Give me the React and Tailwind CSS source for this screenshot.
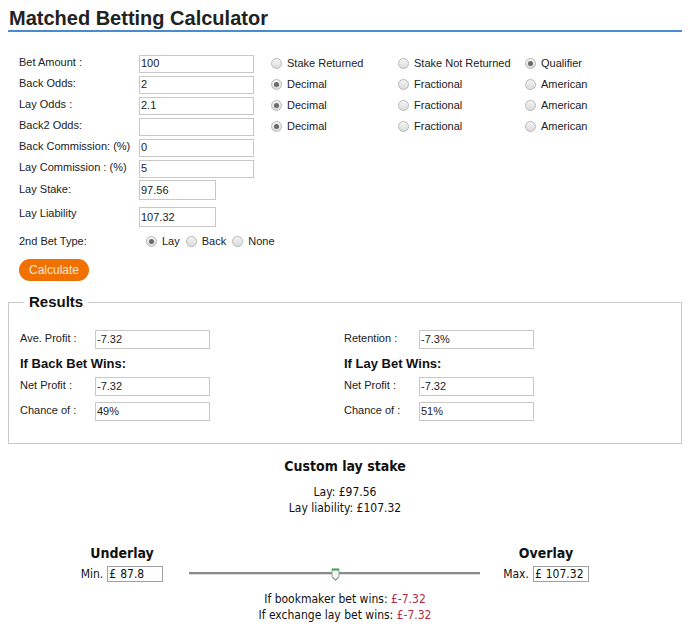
import React from "react";

const Radio = ({ checked }) => (
  <span className="relative inline-flex h-[11px] w-[11px] shrink-0 items-center justify-center rounded-full border border-[#b8b8b8] bg-gradient-to-b from-[#f4f4f4] to-[#dcdcdc]">
    {checked ? <span className="h-[5px] w-[5px] rounded-full bg-[#6a6a6a]" /> : null}
  </span>
);

const RadioOpt = ({ checked, label, className = "" }) => (
  <div className={`flex items-center gap-[5px] ${className}`}>
    <Radio checked={checked} />
    <span>{label}</span>
  </div>
);

const Field = ({ value, w = "w-[115px]", h = "h-[18px]" }) => (
  <div className={`${w} ${h} flex items-center border border-[#c8c8c8] bg-white pl-[1px] text-[11px] leading-none text-[#222]`}>
    {value}
  </div>
);

const oddsRow = (label, value) => ({ label, value, radios: [["Decimal", true], ["Fractional", false], ["American", false]] });

const rows = [
  { label: "Bet Amount :", value: "100", radios: [["Stake Returned", false], ["Stake Not Returned", false], ["Qualifier", true]] },
  oddsRow("Back Odds:", "2"),
  oddsRow("Lay Odds :", "2.1"),
  oddsRow("Back2 Odds:", ""),
  { label: "Back Commission: (%)", value: "0" },
  { label: "Lay Commission : (%)", value: "5" },
];

const ResultPair = ({ label, value }) => (
  <div className="flex h-[25px] items-center">
    <span className="w-[75px] -translate-y-[1px]">{label}</span>
    <Field value={value} h="h-[19px]" />
  </div>
);

const ResultCol = ({ top, heading, net, chance }) => (
  <div className="flex flex-col">
    <ResultPair label={top[0]} value={top[1]} />
    <div className="mt-[2px] h-[20px] text-[13px] font-bold leading-[20px] text-[#111]">{heading}</div>
    <ResultPair label="Net Profit :" value={net} />
    <ResultPair label="Chance of :" value={chance} />
  </div>
);

export default function App() {
  return (
    <div className="min-h-[632px] bg-white px-2 pt-[6px] text-[11px] text-[#222]" style={{ fontFamily: "'Liberation Sans', Arial, sans-serif" }}>
      <h1 className="h-[24px] pl-[1px] text-[20px] font-bold leading-[24px] text-[#222]">Matched Betting Calculator</h1>
      <div className="w-[674px] border-b-2 border-[#4a8ad0]" />

      {/* input form */}
      <div className="pl-[11px] pt-[21px]">
        {rows.map((r) => (
          <div key={r.label} className="flex h-[21px] items-center">
            <span className="w-[120px] -translate-y-[1px]">{r.label}</span>
            <Field value={r.value} />
            {r.radios ? (
              <div className="ml-[17px] flex">
                <RadioOpt checked={r.radios[0][1]} label={r.radios[0][0]} className="w-[127px]" />
                <RadioOpt checked={r.radios[1][1]} label={r.radios[1][0]} className="w-[127px]" />
                <RadioOpt checked={r.radios[2][1]} label={r.radios[2][0]} />
              </div>
            ) : null}
          </div>
        ))}
        <div className="mt-[1px] flex h-[22px] items-start">
          <span className="w-[120px] pt-[1px]">Lay Stake:</span>
          <Field value="97.56" w="w-[77px]" h="h-[20px]" />
        </div>
        <div className="mt-[5px] flex h-[22px] items-start">
          <span className="w-[120px] -translate-y-[2px]">Lay Liability</span>
          <Field value="107.32" w="w-[77px]" h="h-[20px]" />
        </div>
        <div className="mt-[2px] flex h-[20px] items-center">
          <span className="w-[127px]">2nd Bet Type:</span>
          <RadioOpt checked label="Lay" className="mr-[6px]" />
          <RadioOpt label="Back" className="mr-[6px]" />
          <RadioOpt label="None" />
        </div>
        <button className="mt-[8px] h-[22px] rounded-full bg-[#f07000] px-[10px] text-[12px] leading-[22px] text-[#fde6d0]">
          Calculate
        </button>
      </div>

      {/* results */}
      <fieldset className="mt-[10px] w-[674px] border border-[#c8c8c8] px-[11px] pb-[19px]">
        <legend className="ml-[4px] px-[5px] text-[15px] font-bold text-[#111]">Results</legend>
        <div className="mt-[13px] grid grid-cols-[324px_1fr]">
          <ResultCol top={["Ave. Profit :", "-7.32"]} heading="If Back Bet Wins:" net="-7.32" chance="49%" />
          <ResultCol top={["Retention :", "-7.3%"]} heading="If Lay Bet Wins:" net="-7.32" chance="51%" />
        </div>
      </fieldset>

      {/* custom lay stake */}
      <div className="text-[12px] text-[#111]" style={{ fontFamily: "Tahoma, 'DejaVu Sans Condensed', 'DejaVu Sans', sans-serif" }}>
        <div className="mt-[13px] text-center text-[14px] font-bold leading-[18px]">Custom lay stake</div>
        <div className="mt-[9px] text-center leading-[16px]">
          <div>Lay: £97.56</div>
          <div>Lay liability: £107.32</div>
        </div>
        <div className="mt-[28px] flex items-start">
          <div className="ml-[58px] flex w-[112px] flex-col items-center">
            <div className="text-[14px] font-bold leading-[18px]">Underlay</div>
            <div className="mt-[3px] flex items-center gap-[4px]">
              <span>Min.</span>
              <div className="flex h-[16px] w-[56px] items-center border border-[#a0a0a0] pl-[1px] leading-none">£ <span className="ml-[4px]">87.8</span></div>
            </div>
          </div>
          <div className="ml-[11px] mt-[24px] w-[291px]">
            <div className="relative h-[10px]">
              <div className="absolute left-0 right-0 top-[4px] h-[3px] border-t-2 border-[#8a8a8a] bg-[#dedede]" />
              <svg className="absolute left-[142px] top-0" width="9" height="13" viewBox="0 0 9 13">
                <path d="M1 1.5h7v7.5l-3.5 3.5-3.5-3.5z" fill="#f4f4f4" stroke="#9a9a9a" strokeWidth="1" />
                <path d="M1 1.5h7" stroke="#3aa040" strokeWidth="2" />
                <path d="M1.5 9l3 3 3-3" fill="none" stroke="#4aaa50" strokeWidth="1" />
              </svg>
            </div>
          </div>
          <div className="ml-[10px] flex w-[112px] flex-col items-center">
            <div className="text-[14px] font-bold leading-[18px]">Overlay</div>
            <div className="mt-[3px] flex items-center gap-[4px]">
              <span>Max.</span>
              <div className="flex h-[16px] w-[56px] items-center border border-[#a0a0a0] pl-[1px] leading-none">£ <span className="ml-[4px]">107.32</span></div>
            </div>
          </div>
        </div>
        <div className="mt-[8px] text-center leading-[16px]">
          <div>If bookmaker bet wins: <span className="text-[#b02c4c]">£-7.32</span></div>
          <div>If exchange lay bet wins: <span className="text-[#b02c4c]">£-7.32</span></div>
        </div>
      </div>
    </div>
  );
}
